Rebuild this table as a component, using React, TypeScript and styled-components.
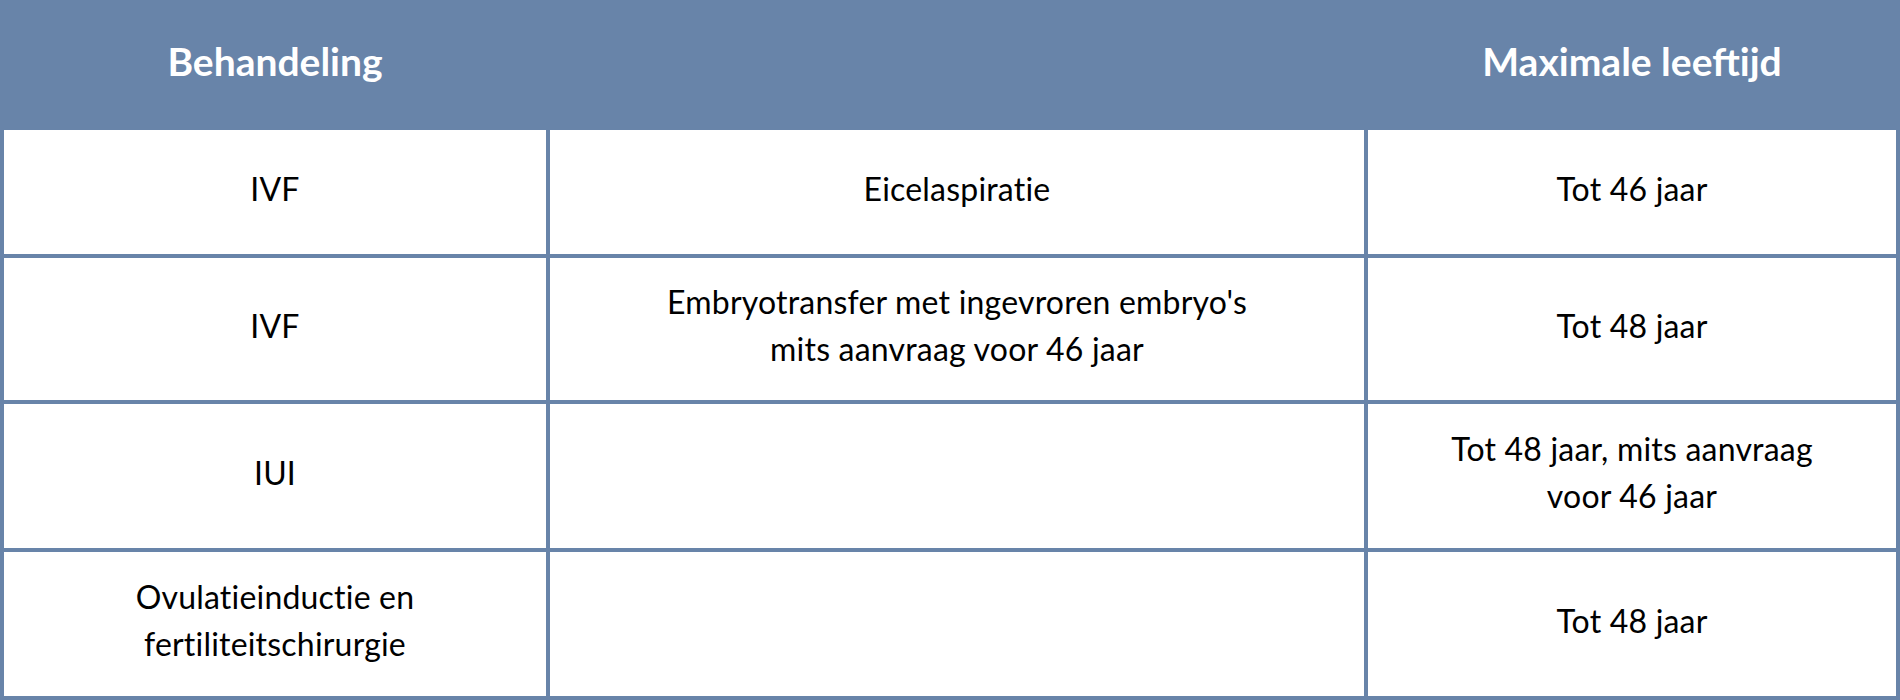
import React from "react";
import styled, { createGlobalStyle } from "styled-components";

const GlobalStyle = createGlobalStyle`
  html, body {
    margin: 0;
    padding: 0;
    background: #ffffff;
  }

  body {
    font-family: Lato, "Open Sans", Arial, sans-serif;
  }
`;

const BLUE = "#6884a9";

const Table = styled.div`
  width: 1900px;
  height: 700px;
  display: flex;
  flex-direction: column;
  background: ${BLUE};
  box-sizing: border-box;
`;

const HeaderRow = styled.div`
  height: 130px;
  display: grid;
  grid-template-columns: 546px 818px 532px;
  align-items: center;
  padding-bottom: 8px;
  box-sizing: border-box;
`;

const HeaderCell = styled.div`
  text-align: center;
  color: #ffffff;
  font-weight: 700;
  font-size: 39px;
  padding-left: 4px;
`;

const Body = styled.div`
  flex: 1;
  display: grid;
  grid-template-columns: 542px 814px 528px;
  grid-template-rows: 124px 142px 144px 144px;
  gap: 4px;
  padding: 0 4px 4px 4px;
`;

const Cell = styled.div`
  background: #ffffff;
  display: flex;
  align-items: center;
  justify-content: center;
  text-align: center;
  color: #000000;
  font-size: 32px;
  letter-spacing: 0.2px;
  line-height: 47px;
  padding: 0 20px 8px;
`;

interface IRow {
  treatment: string[];
  detail: string[];
  age: string[];
}

const rows: IRow[] = [
  { treatment: ["IVF"], detail: ["Eicelaspiratie"], age: ["Tot 46 jaar"] },
  {
    treatment: ["IVF"],
    detail: ["Embryotransfer met ingevroren embryo's", "mits aanvraag voor 46 jaar"],
    age: ["Tot 48 jaar"],
  },
  {
    treatment: ["IUI"],
    detail: [],
    age: ["Tot 48 jaar, mits aanvraag", "voor 46 jaar"],
  },
  {
    treatment: ["Ovulatieinductie en", "fertiliteitschirurgie"],
    detail: [],
    age: ["Tot 48 jaar"],
  },
];

const Lines = ({ lines }: { lines: string[] }) => (
  <span>
    {lines.map((line, i) => (
      <React.Fragment key={i}>
        {i > 0 && <br />}
        {line}
      </React.Fragment>
    ))}
  </span>
);

const App: React.FunctionComponent = () => {
  return (
    <>
      <GlobalStyle />
      <Table>
        <HeaderRow>
          <HeaderCell>Behandeling</HeaderCell>
          <HeaderCell />
          <HeaderCell>Maximale leeftijd</HeaderCell>
        </HeaderRow>
        <Body>
          {rows.map((row, i) => (
            <React.Fragment key={i}>
              <Cell>
                <Lines lines={row.treatment} />
              </Cell>
              <Cell>
                <Lines lines={row.detail} />
              </Cell>
              <Cell>
                <Lines lines={row.age} />
              </Cell>
            </React.Fragment>
          ))}
        </Body>
      </Table>
    </>
  );
};

export default App;
